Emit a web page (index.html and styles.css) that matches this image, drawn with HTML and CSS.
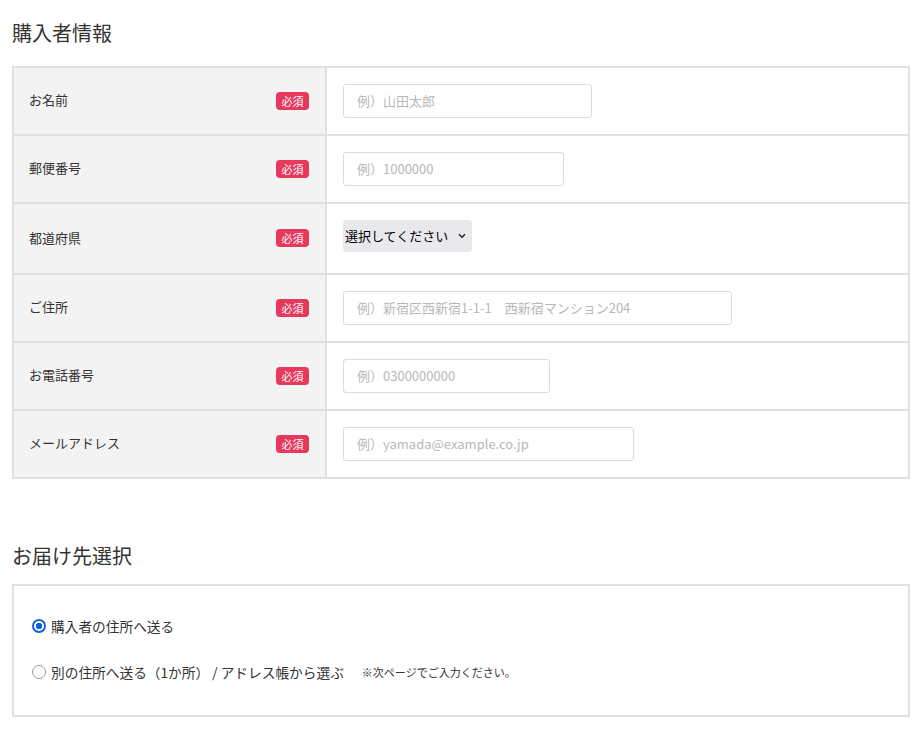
FILE: index.html
```html
<!DOCTYPE html>
<html lang="ja">
<head>
<meta charset="utf-8">
<title>購入者情報</title>
<link rel="stylesheet" href="styles.css">
</head>
<body>
<main class="page">
  <h2 class="section-title">購入者情報</h2>
  <table class="form-table">
    <tr>
      <th class="label-cell"><div class="label-inner"><span>お名前</span><span class="badge">必須</span></div></th>
      <td class="field-cell"><input class="text-input w-name" type="text" placeholder="例）山田太郎"></td>
    </tr>
    <tr>
      <th class="label-cell"><div class="label-inner"><span>郵便番号</span><span class="badge">必須</span></div></th>
      <td class="field-cell"><input class="text-input w-zip" type="text" placeholder="例）1000000"></td>
    </tr>
    <tr>
      <th class="label-cell"><div class="label-inner"><span>都道府県</span><span class="badge">必須</span></div></th>
      <td class="field-cell field-cell--select">
        <div class="select-wrap">
          <select class="select">
            <option>選択してください</option>
          </select>
          <svg class="chevron" width="8" height="6" viewBox="0 0 8 6"><path d="M1 1.2 L4 4.2 L7 1.2" fill="none" stroke="#222" stroke-width="1.4"/></svg>
        </div>
      </td>
    </tr>
    <tr>
      <th class="label-cell"><div class="label-inner"><span>ご住所</span><span class="badge">必須</span></div></th>
      <td class="field-cell"><input class="text-input w-addr" type="text" placeholder="例）新宿区西新宿1-1-1　西新宿マンション204"></td>
    </tr>
    <tr>
      <th class="label-cell"><div class="label-inner"><span>お電話番号</span><span class="badge">必須</span></div></th>
      <td class="field-cell"><input class="text-input w-tel" type="text" placeholder="例）0300000000"></td>
    </tr>
    <tr>
      <th class="label-cell"><div class="label-inner"><span>メールアドレス</span><span class="badge">必須</span></div></th>
      <td class="field-cell"><input class="text-input w-mail" type="text" placeholder="例）yamada@example.co.jp"></td>
    </tr>
  </table>

  <h2 class="section-title section-title--second">お届け先選択</h2>
  <div class="delivery-box">
    <label class="radio-row">
      <input class="radio" type="radio" name="dest" checked>
      <span>購入者の住所へ送る</span>
    </label>
    <label class="radio-row">
      <input class="radio" type="radio" name="dest">
      <span>別の住所へ送る（1か所） / アドレス帳から選ぶ</span>
      <span class="note">※次ページでご入力ください。</span>
    </label>
  </div>
</main>
</body>
</html>
```

FILE: styles.css
```css
* { box-sizing: border-box; }

body {
  margin: 0;
  background: #fff;
  color: #333;
  font-family: "Noto Sans CJK JP", "Noto Sans", "Liberation Sans", sans-serif;
}

.page {
  width: 898px;
  margin-left: 12px;
  padding-top: 18px;
}

.section-title {
  margin: 0 0 18px;
  font-size: 20px;
  line-height: 30px;
  font-weight: 400;
  color: #333;
}

.section-title--second {
  margin-top: 62px;
  margin-bottom: 13px;
}

.form-table {
  width: 898px;
  border-spacing: 0;
  border-top: 2px solid #e0e0e0;
  border-left: 2px solid #e0e0e0;
  table-layout: fixed;
}

.label-cell {
  width: 313px;
  background: #f3f3f3;
  border-right: 2px solid #e0e0e0;
  border-bottom: 2px solid #e0e0e0;
  padding: 0 16px 3px 15px;
  text-align: left;
  font-weight: 400;
  font-size: 13px;
  color: #333;
  vertical-align: middle;
}

.label-inner {
  display: flex;
  align-items: center;
  justify-content: space-between;
}

.badge {
  display: inline-block;
  width: 33px;
  height: 18px;
  line-height: 18px;
  border-radius: 4px;
  background: #e8385b;
  color: #fff;
  font-size: 11px;
  text-align: center;
  margin-top: 2px;
}

.field-cell {
  border-right: 2px solid #e0e0e0;
  border-bottom: 2px solid #e0e0e0;
  padding: 16px;
  vertical-align: top;
}

.field-cell--select {
  padding-bottom: 21px;
}

.text-input {
  display: block;
  height: 34px;
  border: 1px solid #dcdcdc;
  border-radius: 3px;
  padding: 0 0 1px 13px;
  font-family: inherit;
  font-size: 13px;
  color: #333;
  background: #fff;
  outline: none;
}

.text-input::placeholder { color: #b8b8b8; }

.w-name { width: 249px; }
.w-zip { width: 221px; }
.w-addr { width: 389px; }
.w-tel { width: 207px; }
.w-mail { width: 291px; }

.select-wrap {
  position: relative;
  width: 129px;
  height: 32px;
}

.select {
  appearance: none;
  -webkit-appearance: none;
  display: block;
  width: 129px;
  height: 32px;
  border: 0;
  border-radius: 4px;
  background: #e9e9ed;
  padding: 0 0 1px 2px;
  font-family: inherit;
  font-size: 13px;
  color: #000;
}

.chevron {
  position: absolute;
  right: 6px;
  top: 13px;
  pointer-events: none;
}

.delivery-box {
  border: 2px solid #e0e0e0;
  padding: 29px 18px 32px;
  display: flex;
  flex-direction: column;
  gap: 24px;
}

.radio-row {
  display: flex;
  align-items: center;
  font-size: 13.7px;
  color: #333;
  height: 22px;
}

.radio {
  appearance: none;
  -webkit-appearance: none;
  flex: none;
  margin: 0 5px 0 0;
  width: 14px;
  height: 14px;
  border: 1.5px solid #9a9aa4;
  border-radius: 50%;
  background: #fff;
}

.radio:checked {
  border: 2px solid #1463d8;
  background: radial-gradient(circle, #1463d8 0 3px, #fff 3.5px);
}

.note {
  font-size: 11px;
  margin-left: 18px;
}
```
